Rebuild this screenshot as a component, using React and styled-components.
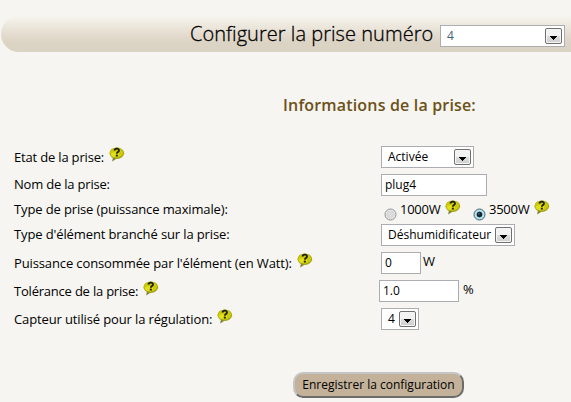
import React from 'react';
import styled, { createGlobalStyle } from 'styled-components';

const GlobalStyle = createGlobalStyle`
  * { box-sizing: border-box; }
  body { margin: 0; background: #f6f5f1; overflow: hidden; }
`;

const Page = styled.main`
  width: 571px;
  height: 402px;
  padding-top: 16px;
  overflow: hidden;
  background: #f6f5f1;
  color: #000;
  font: 12px/18px "Open Sans", sans-serif;
  white-space: nowrap;
`;

const Header = styled.header`
  display: flex;
  align-items: center;
  height: 36px;
  margin-left: 1px;
  padding: 3px 0 0 189px;
  border-radius: 18px 0 0 18px;
  background: linear-gradient(#f6f4f0 0%, #efebe1 20%, #e3dacd 55%, #dbd3c3 75%, #dad2c2 100%);
`;

const HeaderTitle = styled.h1`
  width: 250px;
  margin: -3px 0 0;
  font-size: 20px;
  line-height: 28px;
  font-weight: 300;
  letter-spacing: 0.04px;
  -webkit-text-stroke: 0.3px #000;
  color: #000;
`;

const SectionTitle = styled.h2`
  margin: 41px 0 0 283px;
  height: 24px;
  font-size: 16px;
  line-height: 24px;
  font-weight: 600;
  letter-spacing: 0.17px;
  color: #6c5017;
`;

const Form = styled.form`
  margin: 26px 0 0 14px;
`;

const Row = styled.div`
  display: grid;
  grid-template-columns: 367px 1fr;
  align-items: center;
  height: ${(p) => p.$h || 28}px;
`;

const Label = styled.div`
  display: flex;
  align-items: center;
  gap: 5px;
  font-size: 13px;
  letter-spacing: ${(p) => p.$ls || 0}px;
  margin-top: ${(p) => (p.$raised ? -2 : 0)}px;
`;

const Cell = styled.div`
  display: flex;
  align-items: center;
  margin-left: ${(p) => p.$shift || 0}px;
`;

const Field = styled.div`
  display: flex;
  align-items: center;
  width: ${(p) => p.$w}px;
  height: 22px;
  padding-left: 3px;
  border: 1px solid #abadb3;
  background: #fff;
`;

const SelectBox = styled(Field)`
  justify-content: space-between;
  padding: 0 2px 0 6px;
  color: ${(p) => p.$color || '#000'};
`;

const Arrow = styled.span`
  display: flex;
  align-items: center;
  justify-content: center;
  width: 17px;
  height: 16px;
  border: 1px solid #707070;
  border-radius: 2px;
  background: linear-gradient(#f2f2f2 0 48%, #dcdcdc 52%, #cfcfcf);
  box-shadow: inset 0 0 0 1px #f5f5f5;
  svg { margin-top: 4px; }
`;

const Unit = styled.span`
  margin: -4px 0 0 ${(p) => p.$gap}px;
  font-size: 13px;
  letter-spacing: -0.2px;
`;

const Choice = styled.span`
  display: flex;
  align-items: center;
  width: ${(p) => p.$w}px;
  padding-left: 3px;
`;

const ChoiceText = styled.span`
  width: 41px;
  margin: -2px 0 0 3px;
  font-size: 13px;
  letter-spacing: -0.25px;
`;

const RadioIcon = styled.svg`
  display: block;
  margin-top: 8px;
`;

const HelpIcon = styled.svg`
  display: block;
  flex: none;
  margin-top: -6px;
  margin-left: ${(p) => p.$x || 0}px;
`;

const Submit = styled.button`
  display: block;
  width: 171px;
  height: 26px;
  margin: 39px 0 0 279px;
  padding: 0;
  border: 2px solid;
  border-color: #c5c5c5 #6b6b6b #6b6b6b #c5c5c5;
  border-radius: 10px;
  background: #c3b299;
  color: #000;
  font: 12px/18px "Open Sans", sans-serif;
`;

function Help({ x }) {
  return (
    <HelpIcon $x={x} width="16" height="15" viewBox="0 0 16 15">
      <path d="M4 10 3.2 14.4 8.6 11Z" fill="#7e8032" />
      <ellipse cx="7.8" cy="6.2" rx="7.3" ry="5.8" fill="#a3a118" />
      <ellipse cx="7.6" cy="5.8" rx="6.5" ry="5" fill="#cdca0a" />
      <ellipse cx="6" cy="7.6" rx="4" ry="2.4" fill="#e2e21a" />
      <path d="M5.4 3.5C5.8 1 10.2 1 10 3.5 9.9 5.1 7.8 5 7.8 6.8" fill="none" stroke="#191c0b" strokeWidth="1.8" />
      <rect x="6.8" y="7.7" width="2" height="1.8" fill="#191c0b" />
    </HelpIcon>
  );
}

function Radio({ checked }) {
  return (
    <RadioIcon width="13" height="13" viewBox="0 0 13 13">
      <circle cx="6.5" cy="6.5" r="5.5" fill={checked ? '#a9dfef' : '#f1f1f1'} stroke={checked ? '#52666e' : '#8e8f8f'} />
      <circle cx="6.5" cy="6.5" r="3.8" fill={checked ? '#87c3d6' : '#dcdcdc'} stroke={checked ? '#c6edf5' : '#cfcfcf'} strokeWidth=".8" />
      {checked && <circle cx="6.5" cy="6.5" r="2.7" fill="#17252e" />}
      {checked && <circle cx="5.9" cy="5.8" r=".8" fill="#5d8293" />}
    </RadioIcon>
  );
}

function Select({ w, color, children }) {
  return (
    <SelectBox $w={w} $color={color}>
      <span>{children}</span>
      <Arrow>
        <svg width="7" height="4" viewBox="0 0 7 4" shapeRendering="crispEdges">
          <path d="M0 0h7v1H0zM1 1h5v1H1zM2 2h3v1H2zM3 3h1v1H3z" fill="#000" />
        </svg>
      </Arrow>
    </SelectBox>
  );
}

export default function App() {
  return (
    <>
      <GlobalStyle />
      <Page>
        <Header>
          <HeaderTitle>Configurer la prise numéro</HeaderTitle>
          <Select w={125} color="#42617a">4</Select>
        </Header>
        <SectionTitle>Informations de la prise:</SectionTitle>
        <Form>
          <Row>
            <Label $ls={-0.18}>Etat de la prise:<Help /></Label>
            <Cell><Select w={93}>Activée</Select></Cell>
          </Row>
          <Row>
            <Label $raised $ls={-0.2}>Nom de la prise:</Label>
            <Cell><Field $w={106}>plug4</Field></Cell>
          </Row>
          <Row $h={22}>
            <Label $raised $ls={-0.13}>Type de prise (puissance maximale):</Label>
            <Cell>
              <Choice $w={89}><Radio /><ChoiceText>1000W</ChoiceText><Help x={4} /></Choice>
              <Choice $w={89}><Radio checked /><ChoiceText>3500W</ChoiceText><Help x={4} /></Choice>
            </Cell>
          </Row>
          <Row>
            <Label $raised $ls={-0.12}>Type d'élément branché sur la prise:</Label>
            <Cell><Select w={134}>Déshumidificateur</Select></Cell>
          </Row>
          <Row>
            <Label $ls={-0.12}>Puissance consommée par l'élément (en Watt):<Help /></Label>
            <Cell><Field $w={40}>0</Field><Unit $gap={2}>W</Unit></Cell>
          </Row>
          <Row>
            <Label $ls={-0.21}>Tolérance de la prise:<Help /></Label>
            <Cell $shift={-2}><Field $w={80}>1.0</Field><Unit $gap={4}>%</Unit></Cell>
          </Row>
          <Row>
            <Label $ls={-0.13}>Capteur utilisé pour la régulation:<Help /></Label>
            <Cell><Select w={38}>4</Select></Cell>
          </Row>
          <Submit type="button">Enregistrer la configuration</Submit>
        </Form>
      </Page>
    </>
  );
}
